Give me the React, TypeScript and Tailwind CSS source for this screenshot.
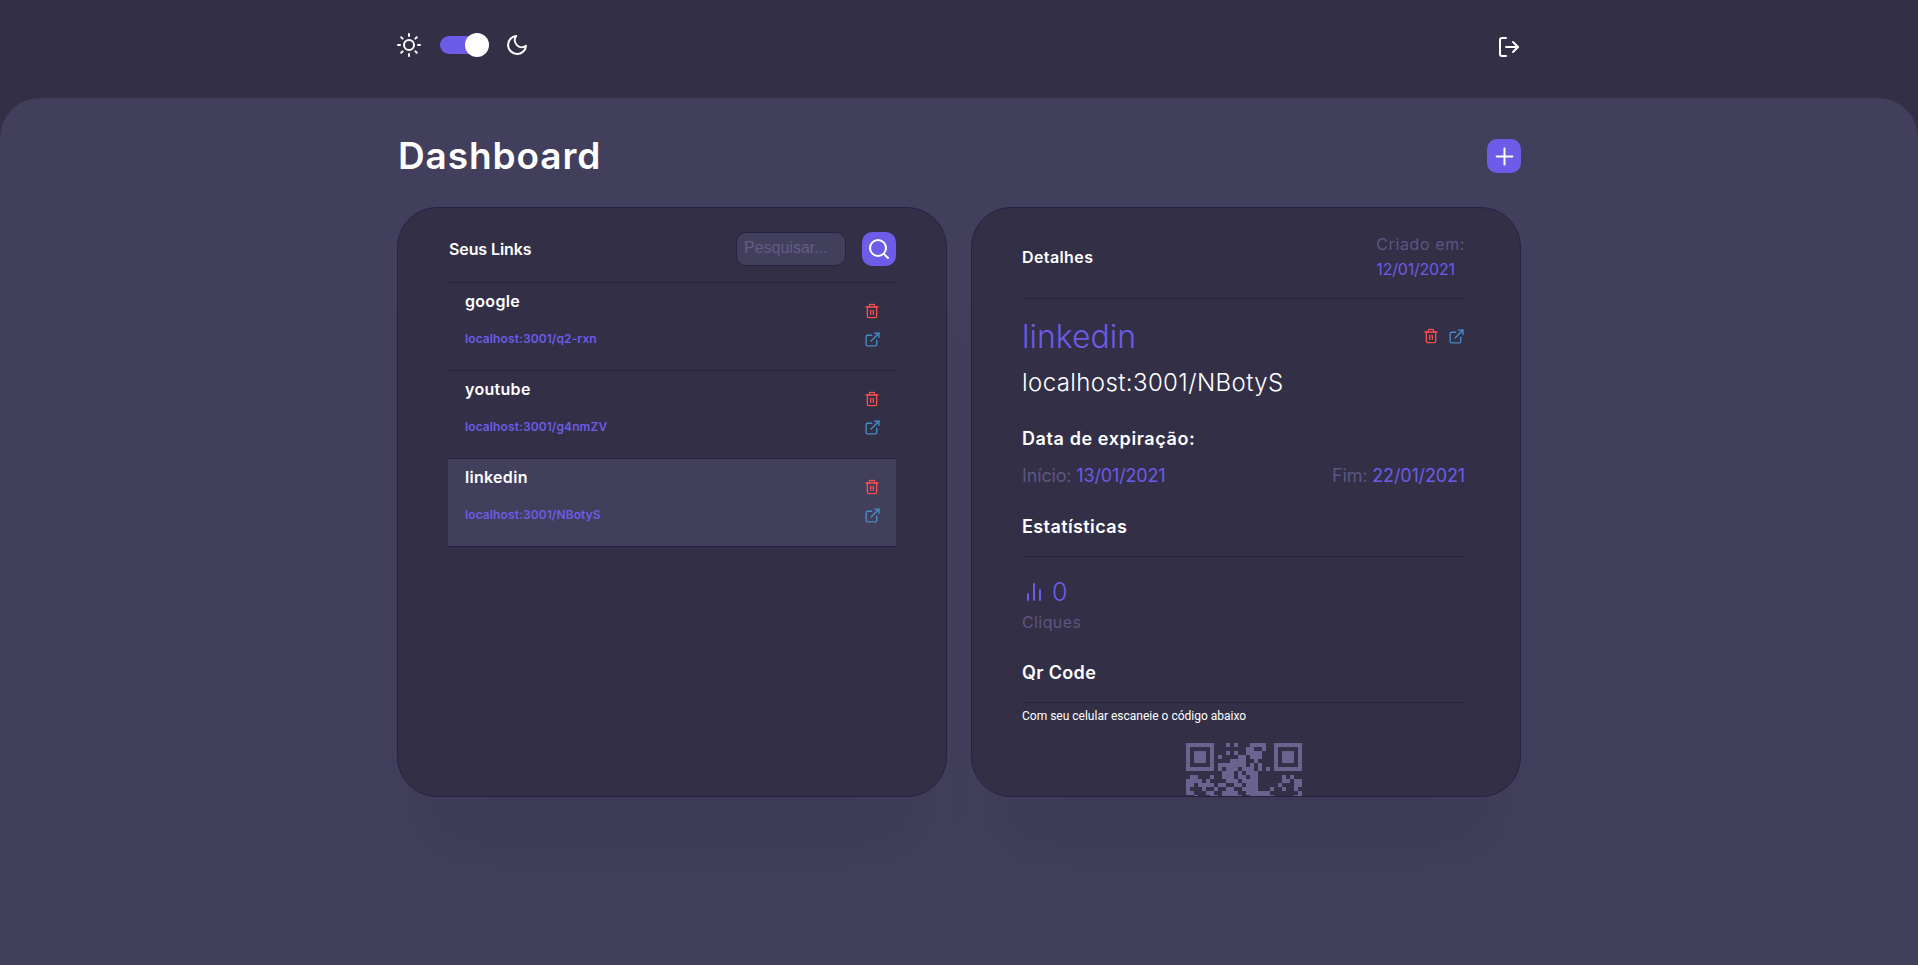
import { FiBarChart2, FiExternalLink, FiLogOut, FiMoon, FiPlus, FiSearch, FiSun, FiTrash2 } from "react-icons/fi";

const links = [
  { name: "google", url: "localhost:3001/q2-rxn" },
  { name: "youtube", url: "localhost:3001/g4nmZV" },
  { name: "linkedin", url: "localhost:3001/NBotyS", active: true },
];

const qrRows = [
  "1111111" + "0" + "0010100011110" + "0" + "1111111",
  "1000001" + "0" + "0000000110010" + "0" + "1000001",
  "1011101" + "0" + "0010100111100" + "0" + "1011101",
  "1011101" + "0" + "1000011011100" + "0" + "1011101",
  "1011101" + "0" + "0001111001000" + "0" + "1011101",
  "1000001" + "0" + "1111111010100" + "0" + "1000001",
  "1111111" + "0" + "1011101110101" + "0" + "1111111",
  "00000000" + "0111010111000" + "00000000",
  "01100010" + "0111011011000" + "00010100",
  "11110100" + "0011101111000" + "00011011",
  "11011110" + "1100110111000" + "00100011",
  "10001001" + "0011001111000" + "10010010",
  "11000110" + "0111100111111" + "00000001",
  "00100011" + "0111110011111" + "10000011",
];

function QrCode() {
  return (
    <svg width="116" height="116" viewBox="0 0 29 29" shapeRendering="crispEdges" className="mx-auto mt-[19px] shrink-0">
      {qrRows.map((row, y) =>
        row.split("").map((cell, x) => (cell === "1" ? <rect key={`${x}-${y}`} x={x} y={y} width="1" height="1" fill="#6a6390" /> : null))
      )}
    </svg>
  );
}

function LinkRow({ name, url, active }: { name: string; url: string; active?: boolean }) {
  return (
    <div className={`flex h-[88px] justify-between border-t border-[#262245] pl-[17px] pr-[15px] ${active ? "bg-[#423f5c]" : ""}`}>
      <div className="pt-[6px]">
        <p className="text-base leading-6 font-semibold tracking-[0.3px] text-white">{name}</p>
        <p className="mt-[18px] text-xs leading-4 font-semibold tracking-[0.1px] text-[#6c5ce7]">{url}</p>
      </div>
      <div className="flex w-[18px] flex-col items-center gap-3 pt-5">
        <FiTrash2 size={16} className="text-[#ff4d4d]" />
        <FiExternalLink size={17} className="text-[#4a8ac4]" />
      </div>
    </div>
  );
}

export default function App() {
  return (
    <div className="flex h-[965px] flex-col overflow-hidden bg-[#332f47] font-['Inter',sans-serif] text-white">
      <header className="mx-auto flex h-[98px] w-[1124px] shrink-0 items-center justify-between">
        <div className="flex items-center pb-2">
          <FiSun size={24} />
          <div className="relative ml-[19px] h-[18px] w-[49px] rounded-full bg-[#6c5ce7]">
            <div className="absolute -top-[3px] right-0 h-6 w-6 rounded-full bg-white" />
          </div>
          <FiMoon size={24} className="ml-4" />
        </div>
        <FiLogOut size={24} className="mb-1" />
      </header>

      <main className="flex-1 rounded-t-[40px] bg-[#423f5c]">
        <div className="mx-auto w-[1124px] pt-[41px]">
          <div className="flex h-[34px] items-center justify-between">
            <h1 className="ml-[1px] text-[37px] font-semibold tracking-[0.9px]">Dashboard</h1>
            <button className="flex h-[34px] w-[34px] items-center justify-center rounded-[10px] bg-[#6c5ce7]">
              <FiPlus size={27} strokeWidth={1.8} />
            </button>
          </div>

          <div className="mt-[34px] flex gap-6">
            <section className="h-[590px] w-[550px] overflow-hidden rounded-[40px] border border-[#262245] bg-[#332f47] px-[50px] pt-6 shadow-[0_80px_60px_-30px_rgba(0,0,0,0.07)]">
              <div className="flex h-[34px] items-center justify-between">
                <h2 className="ml-[1px] text-base font-semibold tracking-[-0.1px]">Seus Links</h2>
                <div className="flex items-center gap-4">
                  <input
                    placeholder="Pesquisar..."
                    className="h-[34px] w-[110px] rounded-[10px] border border-[#262245] bg-[#423f5c] px-[7px] pb-[3px] font-['Liberation_Sans',sans-serif] text-base outline-none placeholder:text-[#625c86]"
                  />
                  <button className="flex h-[34px] w-[34px] items-center justify-center rounded-[10px] bg-[#6c5ce7]">
                    <FiSearch size={24} />
                  </button>
                </div>
              </div>
              <div className="mt-4 border-b border-[#262245]">
                {links.map((link) => (
                  <LinkRow key={link.name} {...link} />
                ))}
              </div>
            </section>

            <section className="flex h-[590px] w-[550px] flex-col overflow-hidden rounded-[40px] border border-[#262245] bg-[#332f47] pl-[50px] pr-[55px] pt-6 shadow-[0_80px_60px_-30px_rgba(0,0,0,0.07)]">
              <div className="flex shrink-0 items-center justify-between border-b border-[#262245] pb-4">
                <h2 className="text-base font-semibold tracking-[0.4px]">Detalhes</h2>
                <div className="text-base leading-[25px]">
                  <p className="tracking-[0.6px] text-[#5c5780]">Criado em:</p>
                  <p className="tracking-[-0.2px] text-[#6c5ce7]">12/01/2021</p>
                </div>
              </div>

              <div className="mt-[14px] flex shrink-0 items-center justify-between">
                <h3 className="text-[32px] leading-[48px] font-light text-[#6c5ce7]">linkedin</h3>
                <div className="-mt-[2px] flex items-center gap-[9px]">
                  <FiTrash2 size={16} className="text-[#ff4d4d]" />
                  <FiExternalLink size={17} className="text-[#4a8ac4]" />
                </div>
              </div>
              <p className="mt-1 shrink-0 text-2xl leading-9 font-light tracking-[0.4px]">localhost:3001/NBotyS</p>

              <h4 className="mt-6 shrink-0 text-lg leading-7 font-semibold tracking-[0.6px]">Data de expiração:</h4>
              <div className="mt-[9px] flex shrink-0 justify-between text-lg leading-7 tracking-[-0.15px]">
                <p className="text-[#5c5780]">
                  Início: <span className="text-[#6c5ce7]">13/01/2021</span>
                </p>
                <p className="text-[#5c5780]">
                  Fim: <span className="text-[#6c5ce7]">22/01/2021</span>
                </p>
              </div>

              <h4 className="mt-[23px] shrink-0 border-b border-[#262245] pb-[15px] text-lg leading-7 font-semibold tracking-[0.4px]">Estatísticas</h4>
              <div className="mt-[19px] flex h-8 shrink-0 items-center text-[#6c5ce7]">
                <FiBarChart2 size={24} />
                <span className="ml-[6px] text-[25px] leading-8 font-light">0</span>
              </div>
              <p className="mt-[2px] shrink-0 text-base leading-6 tracking-[0.4px] text-[#5c5780]">Cliques</p>

              <h4 className="mt-[25px] shrink-0 border-b border-[#262245] pb-[15px] text-lg leading-7 font-semibold tracking-[0.35px]">Qr Code</h4>
              <p className="mt-[5px] shrink-0 font-['Roboto',sans-serif] text-xs leading-4">Com seu celular escaneie o código abaixo</p>
              <QrCode />
            </section>
          </div>
        </div>
      </main>
    </div>
  );
}
